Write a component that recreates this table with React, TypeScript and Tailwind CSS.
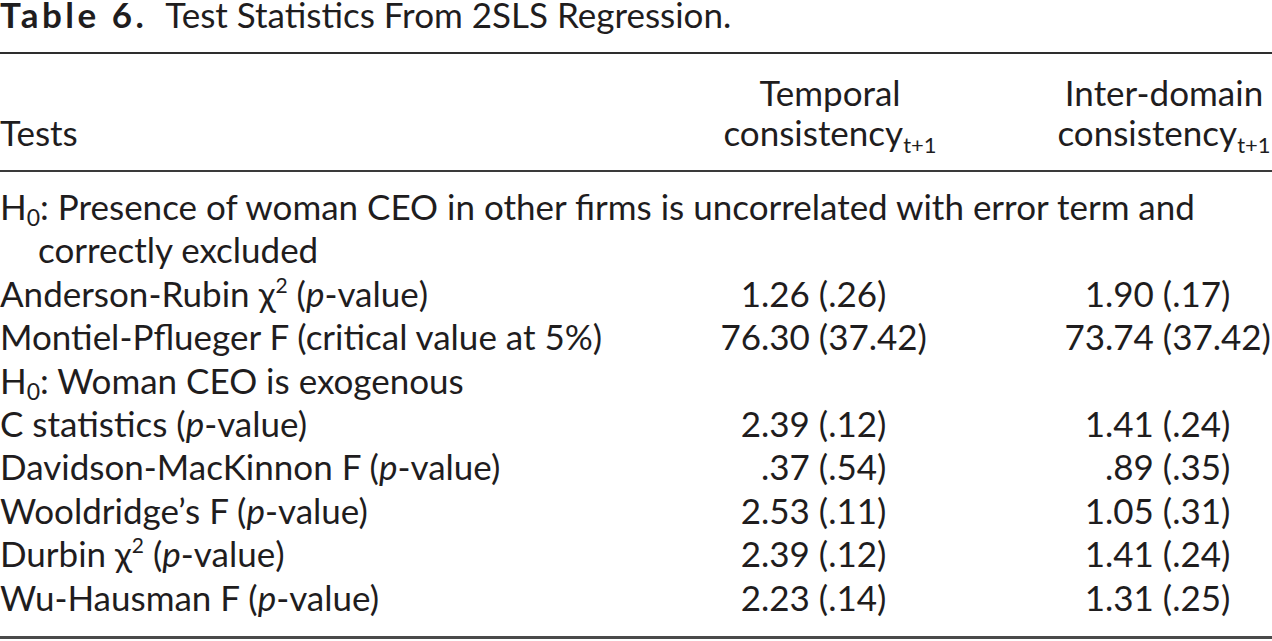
const rows: { label: React.ReactNode; a?: string; b?: string }[] = [];

function PVal() {
  return (
    <>
      (<i>p</i>-value)
    </>
  );
}

function Chi() {
  return (
    <>
      χ<sup className="text-[21px] leading-none relative -top-[14px]">2</sup>
    </>
  );
}

function H0() {
  return (
    <>
      H<sub className="text-[23px] leading-none relative top-[6px]">0</sub>
    </>
  );
}

// splits the value at its first dot so the column can line up on the decimal point
function Num({ v, w }: { v: string; w: string }) {
  const i = v.indexOf(".");
  return (
    <div className="flex whitespace-pre">
      <span className={`${w} text-right`}>{v.slice(0, i)}</span>
      <span>{v.slice(i)}</span>
    </div>
  );
}

rows.push(
  { label: <>Anderson-Rubin <Chi /> <PVal /></>, a: "1.26 (.26)", b: "1.90 (.17)" },
  { label: "Montiel-Pflueger F (critical value at 5%)", a: "76.30 (37.42)", b: "73.74 (37.42)" },
);

const rows2 = [
  { label: <>C statistics <PVal /></>, a: "2.39 (.12)", b: "1.41 (.24)" },
  { label: <>Davidson-MacKinnon F <PVal /></>, a: ".37 (.54)", b: ".89 (.35)" },
  { label: <>Wooldridge’s F <PVal /></>, a: "2.53 (.11)", b: "1.05 (.31)" },
  { label: <>Durbin <Chi /> <PVal /></>, a: "2.39 (.12)", b: "1.41 (.24)" },
  { label: <>Wu-Hausman F <PVal /></>, a: "2.23 (.14)", b: "1.31 (.25)" },
];

function Row({ label, a, b }: { label: React.ReactNode; a?: string; b?: string }) {
  return (
    <div className="grid grid-cols-[700px_260px_96px_216px] leading-[43.4px]">
      <div className="whitespace-nowrap">{label}</div>
      <div>{a && <Num v={a} w="w-[61px]" />}</div>
      <div />
      <div>{b && <Num v={b} w="w-[49px]" />}</div>
    </div>
  );
}

export default function App() {
  return (
    <div className="w-[1272px] h-[641px] bg-white text-[#1f1d1e] font-['Lato',sans-serif] overflow-hidden">
      <div className="h-[52px] text-[35px] leading-[28px] whitespace-nowrap">
        <span className="font-bold tracking-[3.5px]">Table 6.</span>
        <span className="ml-[18px]">Test Statistics From 2SLS Regression.</span>
      </div>
      <div className="h-[2px] bg-[#2e2e2e]" />

      {/* header */}
      <div className="grid grid-cols-[700px_260px_96px_216px] text-[35px] leading-[40px] pt-[18px] pb-[18px]">
        <div className="flex flex-col justify-end">Tests</div>
        <div className="text-center whitespace-nowrap">
          <div>Temporal</div>
          <div>
            consistency<sub className="text-[22px] leading-none relative top-[7px]">t+1</sub>
          </div>
        </div>
        <div />
        <div className="text-center whitespace-nowrap">
          <div>Inter-domain</div>
          <div>
            consistency<sub className="text-[22px] leading-none relative top-[7px]">t+1</sub>
          </div>
        </div>
      </div>
      <div className="h-[2px] bg-[#3a3a3a]" />

      <div className="text-[35px] pt-[13px] pb-[17px]">
        <div className="leading-[43.4px] pl-[38px] -indent-[38px] pr-[20px]">
          <H0 />: Presence of woman CEO in other firms is uncorrelated with error term and correctly excluded
        </div>
        {rows.map((r, i) => (
          <Row key={i} {...r} />
        ))}
        <div className="leading-[43.4px]">
          <H0 />: Woman CEO is exogenous
        </div>
        {rows2.map((r, i) => (
          <Row key={i} {...r} />
        ))}
      </div>
      <div className="h-[3px] bg-[#4a4a4a]" />
    </div>
  );
}
